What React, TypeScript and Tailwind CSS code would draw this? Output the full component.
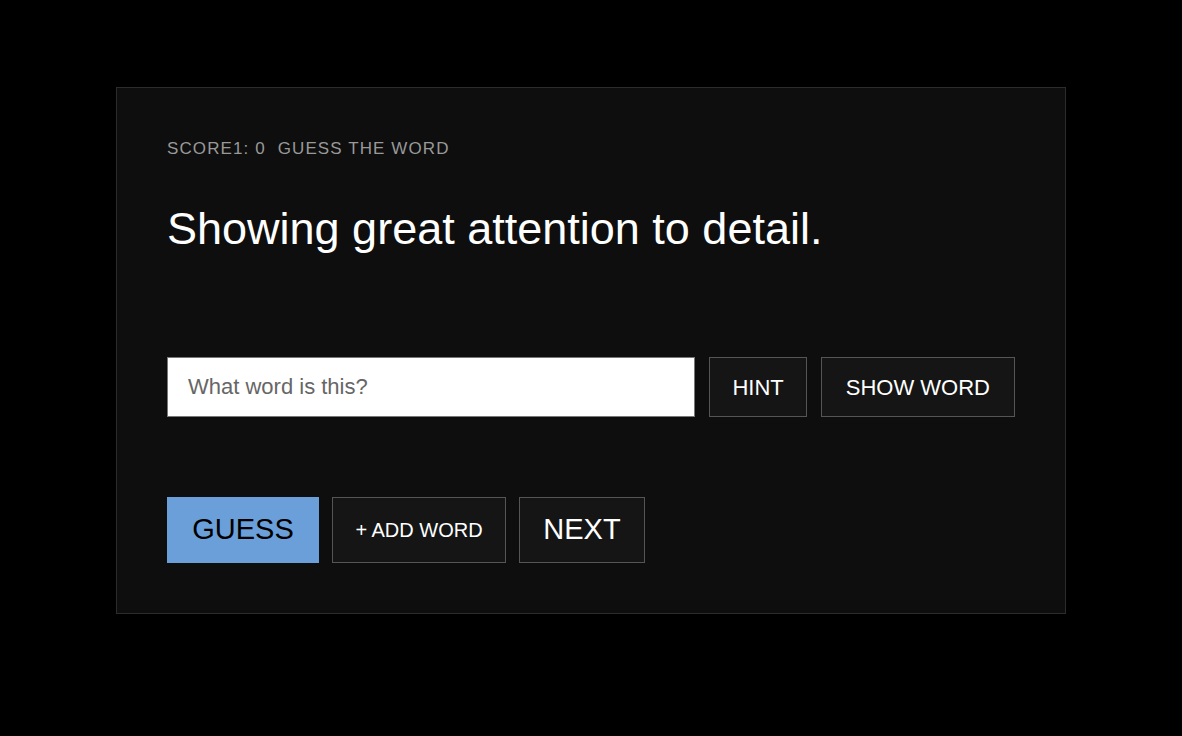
import { useState } from "react";

const font = { fontFamily: '"Liberation Sans", Arial, sans-serif' };

export default function App() {
  const [guess, setGuess] = useState("");
  const [score] = useState(0);

  return (
    <div className="min-h-screen w-full bg-black pt-[87px]" style={font}>
      <div className="mx-auto w-[950px] border border-[#2c2c2c] bg-[#0e0e0e] px-[50px] pt-[51px] pb-[50px]">
        <div className="flex gap-3 text-[17px] leading-[20px] tracking-[1.1px] text-[#999]">
          <span>SCORE1: {score}</span>
          <span>GUESS THE WORD</span>
        </div>

        <h1 className="mt-[44px] text-[45px] leading-[52px] text-white">
          Showing great attention to detail.
        </h1>

        <div className="mt-[102px] flex gap-[14px]">
          <input
            value={guess}
            onChange={(e) => setGuess(e.target.value)}
            placeholder="What word is this?"
            className="h-[60px] flex-1 border border-[#777] bg-white px-5 text-[22px] text-black outline-none placeholder:text-[#666]"
          />
          <button className="h-[60px] border border-[#555] bg-[#151515] px-[22px] text-[22px] text-white">
            HINT
          </button>
          <button className="h-[60px] border border-[#555] bg-[#151515] px-6 text-[22px] text-white">
            SHOW WORD
          </button>
        </div>

        <div className="mt-[80px] flex gap-[13px]">
          <button className="h-[66px] w-[152px] border border-[#6b9fd9] bg-[#6b9fd9] text-[29px] text-black">
            GUESS
          </button>
          <button className="h-[66px] w-[174px] border border-[#555] bg-[#151515] text-[20px] text-white">
            + ADD WORD
          </button>
          <button className="h-[66px] w-[126px] border border-[#555] bg-[#151515] text-[29px] text-white">
            NEXT
          </button>
        </div>
      </div>
    </div>
  );
}
